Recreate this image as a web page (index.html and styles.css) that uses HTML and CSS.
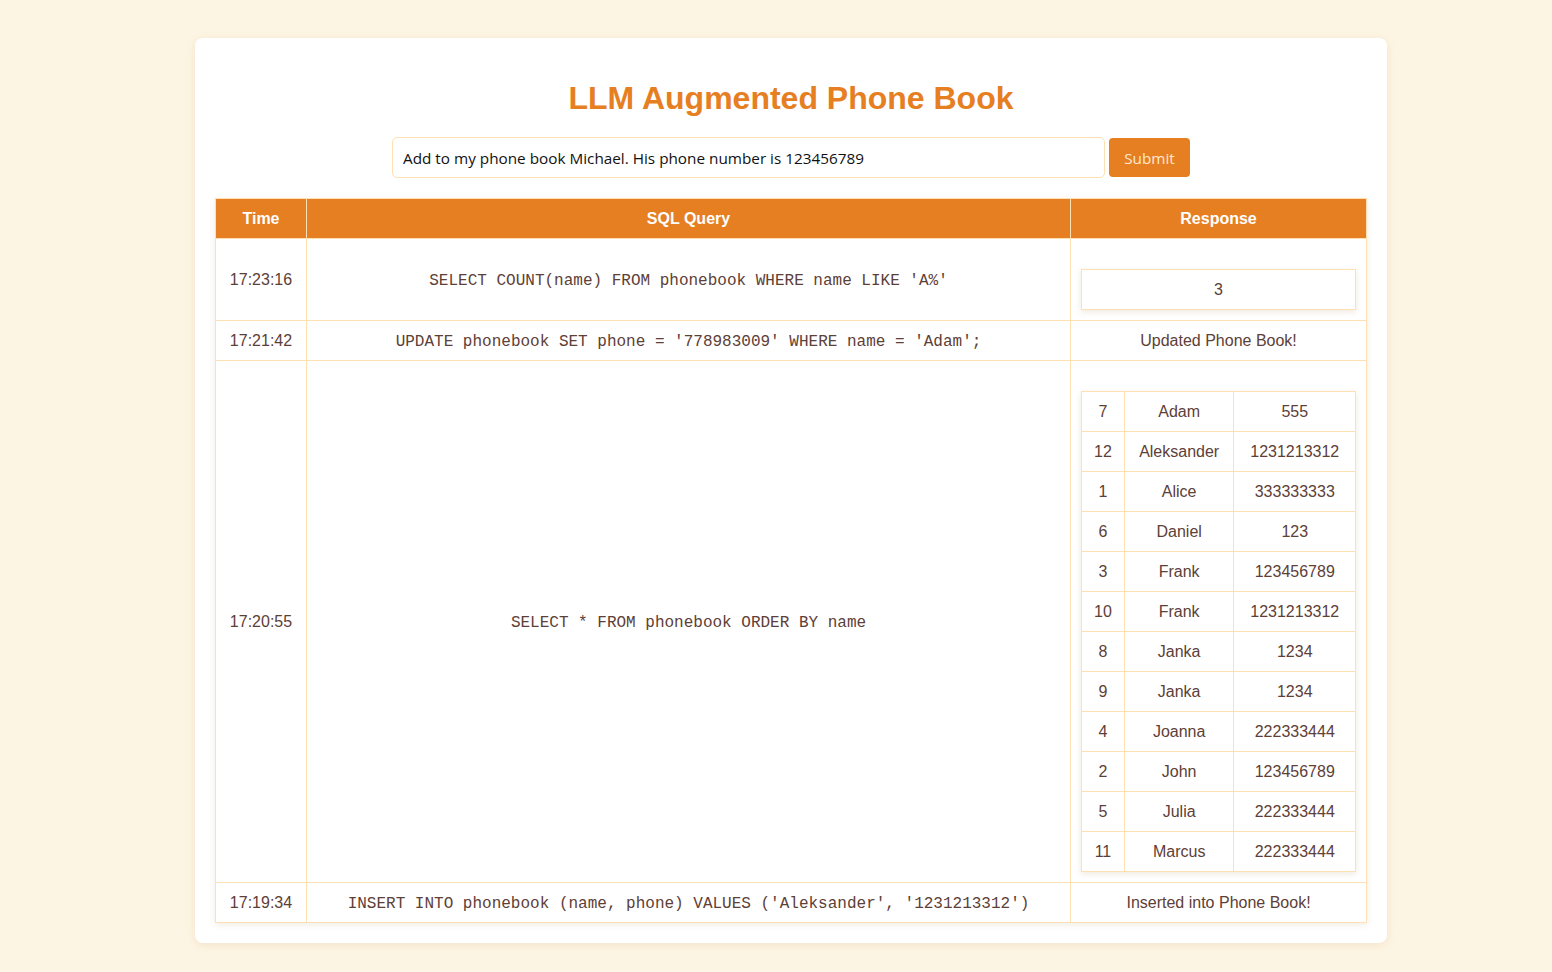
FILE: index.html
```html
<!DOCTYPE html>
<html>
<head>
<meta charset="utf-8">
<title>LLM Augmented Phone Book</title>
<link rel="stylesheet" href="styles.css">
</head>
<body>
<div class="container">
  <h1 class="title">LLM Augmented Phone Book</h1>
  <form class="query-form">
    <input class="query-input" type="text" value="Add to my phone book Michael. His phone number is 123456789">
    <button class="submit-btn" type="button">Submit</button>
  </form>
  <table class="log">
    <thead>
      <tr>
        <th class="col-time">Time</th>
        <th class="col-sql">SQL Query</th>
        <th class="col-resp">Response</th>
      </tr>
    </thead>
    <tbody>
      <tr>
        <td>17:23:16</td>
        <td class="sql">SELECT COUNT(name) FROM phonebook WHERE name LIKE 'A%'</td>
        <td>
          <table class="result">
            <tr><td>3</td></tr>
          </table>
        </td>
      </tr>
      <tr>
        <td>17:21:42</td>
        <td class="sql">UPDATE phonebook SET phone = '778983009' WHERE name = 'Adam';</td>
        <td>Updated Phone Book!</td>
      </tr>
      <tr>
        <td>17:20:55</td>
        <td class="sql">SELECT * FROM phonebook ORDER BY name</td>
        <td>
          <table class="result">
            <colgroup><col class="c-id"><col class="c-name"><col class="c-phone"></colgroup>
            <tr><td>7</td><td>Adam</td><td>555</td></tr>
            <tr><td>12</td><td>Aleksander</td><td>1231213312</td></tr>
            <tr><td>1</td><td>Alice</td><td>333333333</td></tr>
            <tr><td>6</td><td>Daniel</td><td>123</td></tr>
            <tr><td>3</td><td>Frank</td><td>123456789</td></tr>
            <tr><td>10</td><td>Frank</td><td>1231213312</td></tr>
            <tr><td>8</td><td>Janka</td><td>1234</td></tr>
            <tr><td>9</td><td>Janka</td><td>1234</td></tr>
            <tr><td>4</td><td>Joanna</td><td>222333444</td></tr>
            <tr><td>2</td><td>John</td><td>123456789</td></tr>
            <tr><td>5</td><td>Julia</td><td>222333444</td></tr>
            <tr><td>11</td><td>Marcus</td><td>222333444</td></tr>
          </table>
        </td>
      </tr>
      <tr>
        <td>17:19:34</td>
        <td class="sql">INSERT INTO phonebook (name, phone) VALUES ('Aleksander', '1231213312')</td>
        <td>Inserted into Phone Book!</td>
      </tr>
    </tbody>
  </table>
</div>
</body>
</html>
```
FILE: styles.css
```css
html, body {
  margin: 0;
  background: #fdf5e3;
}
body {
  padding: 38px 0 29px 30px;
  font-family: "Liberation Sans", Arial, sans-serif;
  color: #5d4037;
}
.container {
  width: 1152px;
  margin: 0 auto;
  padding: 20px;
  background: #ffffff;
  border-radius: 8px;
  box-shadow: 0 2px 10px rgba(150, 110, 40, 0.12);
}
.title {
  margin: 22px 0 20px;
  text-align: center;
  font-size: 32px;
  font-weight: bold;
  color: #e67e22;
  line-height: 37px;
}
.query-form {
  display: flex;
  justify-content: center;
  align-items: center;
  gap: 4px;
  margin: 0 0 20px;
}
.query-input {
  box-sizing: border-box;
  width: 713px;
  height: 41px;
  padding: 0 10px;
  border: 1px solid #ffe0b2;
  border-radius: 5px;
  font-family: "Open Sans", "Noto Sans", sans-serif;
  font-size: 15.3px;
  color: #111111;
  background: #fff;
  outline: none;
}
.submit-btn {
  box-sizing: border-box;
  width: 81px;
  height: 39px;
  border: none;
  border-radius: 4px;
  background: #e67e22;
  color: #fde9cf;
  font-family: "Open Sans", "Noto Sans", sans-serif;
  font-size: 15.3px;
  padding: 0;
}
.log {
  width: 100%;
  border-collapse: collapse;
  box-shadow: 0 2px 6px rgba(150, 110, 40, 0.12);
}
.log th, .log td {
  border: 1px solid #ffe0b2;
  padding: 10px;
  text-align: center;
  font-size: 16px;
  line-height: 19px;
}
.log th {
  background: #e67e22;
  color: #ffffff;
  font-weight: bold;
  padding: 10px;
}
.col-time { width: 70px; }
.col-sql { width: 744px; }
.col-resp { width: 275px; }
.log td.sql {
  font-family: "Liberation Mono", "Courier New", monospace;
  font-size: 16px;
  padding: 12px 10px 8px;
}
.result {
  width: 100%;
  margin-top: 20px;
  border-collapse: collapse;
  box-shadow: 0 2px 6px rgba(150, 110, 40, 0.15);
}
.log .result td {
  border: 1px solid #ffe0b2;
  padding: 10px;
  line-height: 19px;
}
.c-id { width: 43px; }
.c-name { width: 110px; }
.c-phone { width: 122px; }
```
